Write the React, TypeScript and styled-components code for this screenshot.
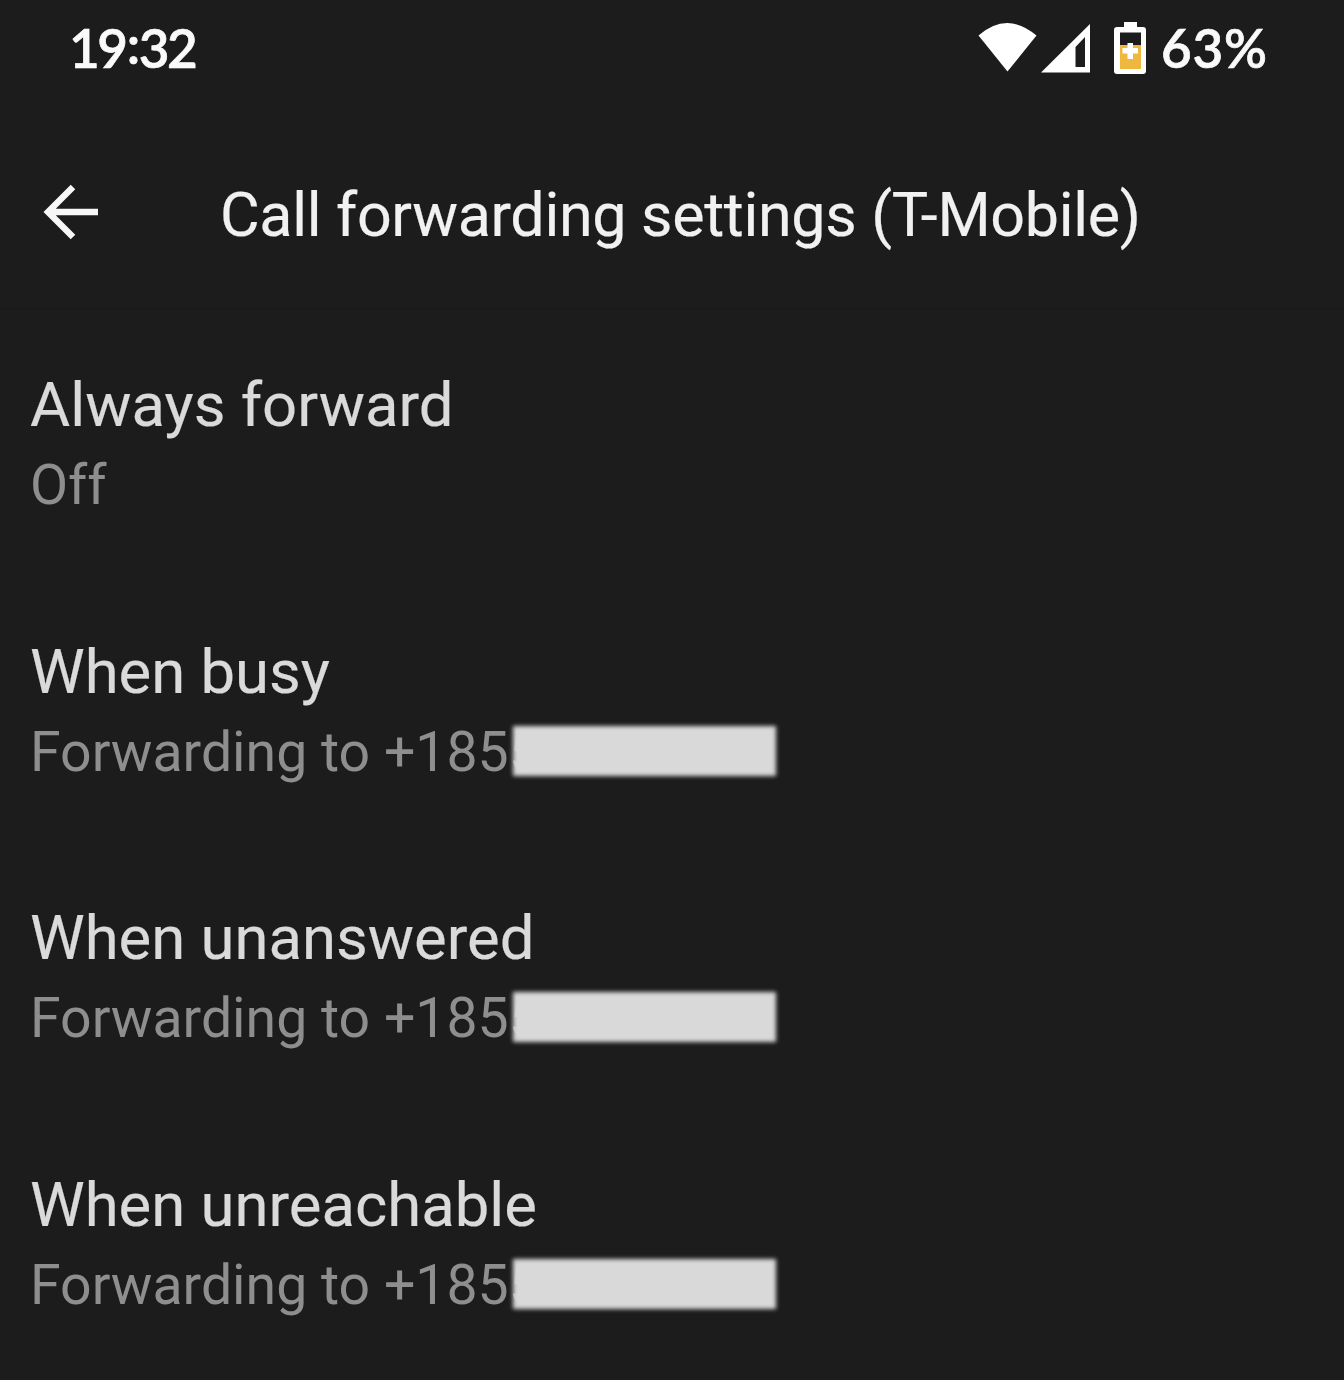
import React from "react";
import styled, { createGlobalStyle } from "styled-components";

const Global = createGlobalStyle`
  * { box-sizing: border-box; }
  body { margin: 0; background: #1c1c1c; font-family: Roboto, "Liberation Sans", sans-serif; }
`;
const Screen = styled.main`
  width: 1344px; height: 1380px; overflow: hidden; background: #1c1c1c;
  display: flex; flex-direction: column;
`;
const StatusBar = styled.header`
  height: 110px; flex: none; padding: 14px 77px 0 69px; display: flex; align-items: flex-start; justify-content: space-between;
`;
const StatusText = styled.span<{ $width: number; $spacing: number }>`
  width: ${p => p.$width}px; white-space: nowrap; color: #fafafa;
  font-family: Lato, Roboto, sans-serif; font-size: 53px; line-height: 68px; font-weight: 600;
  letter-spacing: ${p => p.$spacing}px; -webkit-text-stroke: 0.7px #fafafa;
`;
const Colon = styled.span`
  display: inline-block; transform: translateY(-4px); margin: 0 1px;
`;
const StatusRight = styled.div`display: flex; align-items: flex-start;`;
const StatusIcons = styled.svg`width: 183px; height: 70px; display: block;`;
const Toolbar = styled.div`
  height: 200px; margin-bottom: -2px; flex: none; display: flex; align-items: center;
  padding: 0 40px 2px; background: #1c1c1c; border-bottom: 2px solid #1a1a1a;
`;
const BackButton = styled.button`
  width: 62px; height: 76px; margin-right: 118px; padding: 0; border: 0; background: none; color: #f7f7f7;
  svg { display: block; width: 62px; height: 76px; }
`;
const Title = styled.h1`
  margin: 13px 0 0; font-size: 61px; line-height: 80px; font-weight: 400; letter-spacing: -0.33px; color: #f1f1f1; white-space: nowrap;
  -webkit-text-stroke: 0.2px #f1f1f1;
`;
const List = styled.div`display: flex; flex-direction: column; padding: 58px 30px 0;`;
const Row = styled.section`height: 266.5px; flex: none;`;
const Label = styled.h2`
  margin: 0; font-size: 61.6px; line-height: 79px; font-weight: 400; color: #dadada; white-space: nowrap;
  -webkit-text-stroke: 0.2px #dadada;
`;
const Summary = styled.div`
  display: flex; font-size: 55.4px; line-height: 81px; color: #8e8e8e; white-space: nowrap;
`;
const Redaction = styled.span`width: 263px; height: 50px; margin: 14px 0 0 -26.500px; background: #d9d9d9; filter: blur(2px);`;

const rows = [
  { label: "Always forward", summary: "Off", hidden: false },
  { label: "When busy", summary: "Forwarding to +1855", hidden: true },
  { label: "When unanswered", summary: "Forwarding to +1855", hidden: true },
  { label: "When unreachable", summary: "Forwarding to +1855", hidden: true },
];

export default function App() {
  return (
    <Screen>
      <Global />
      <StatusBar>
        <StatusText $width={128} $spacing={-2.4}>19<Colon>:</Colon>32</StatusText>
        <StatusRight>
          <StatusIcons viewBox="978 14 183 70">
            <path d="M978.5 35.5Q1007 10.5 1036.500 35.5L1007.500 71.500Z" fill="#fff" />
            <path fillRule="evenodd" d="M1090 24V72.500H1041ZM1085 37L1075.500 47V67H1085Z" fill="#fff" />
            <path fillRule="evenodd" d="M1124 22H1137V27H1143Q1146 27 1146 30V71Q1146 74 1143 74H1117Q1114 74 1114 71V30Q1114 27 1117 27H1124ZM1120 32.500V69H1141V32.500Z" fill="#fff" />
            <path d="M1120 45H1141V69H1120Z" fill="#efb73e" />
            <path d="M1127.500 43H1133V48H1138V53.500H1133V59H1127.500V53.500H1122.500V48H1127.500Z" fill="#fff" />
          </StatusIcons>
          <StatusText $width={106} $spacing={0.8}>63%</StatusText>
        </StatusRight>
      </StatusBar>
      <Toolbar>
        <BackButton aria-label="Back">
          <svg viewBox="40 170 62 76"><path d="M98 212H48M73 187L48 212L73 237" fill="none" stroke="currentColor" strokeWidth="6.400" /></svg>
        </BackButton>
        <Title>Call forwarding settings (T-Mobile)</Title>
      </Toolbar>
      <List>
        {rows.map(r => (
          <Row key={r.label}>
            <Label>{r.label}</Label>
            <Summary>{r.summary}{r.hidden && <Redaction />}</Summary>
          </Row>
        ))}
      </List>
    </Screen>
  );
}
